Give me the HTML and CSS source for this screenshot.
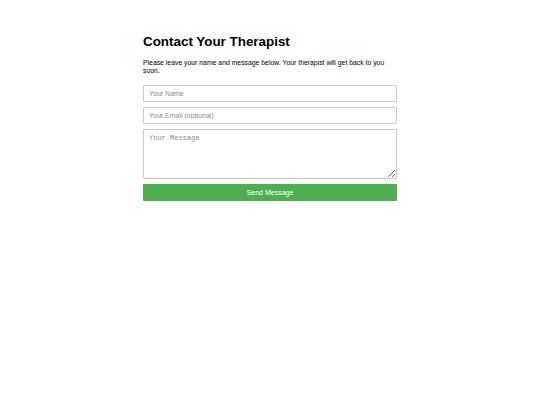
FILE: index.html
```html
<!DOCTYPE html>
<html>
<head>
<meta charset="utf-8">
<link rel="stylesheet" href="styles.css">
</head>
<body>
<div class="container">
  <h1 class="title">Contact Your Therapist</h1>
  <p class="intro">Please leave your name and message below. Your therapist will get back to you soon.</p>
  <form class="form">
    <input class="field" type="text" placeholder="Your Name">
    <input class="field" type="email" placeholder="Your Email (optional)">
    <textarea class="field message" placeholder="Your Message"></textarea>
    <button class="send" type="button">Send Message</button>
  </form>
</div>
</body>
</html>
```
FILE: styles.css
```css
html, body {
  margin: 0;
  padding: 0;
  background: #ffffff;
}
body {
  font-family: "Liberation Sans", Arial, sans-serif;
  font-size: 7px;
  color: #000;
}
.container {
  width: 254px;
  margin: 0 auto;
  padding-top: 34px;
}
.title {
  font-size: 13.4px;
  font-weight: bold;
  margin: 0 0 9px 0;
  line-height: 15.5px;
}
.intro {
  margin: 0 0 10.5px 0;
  line-height: 8px;
  font-size: 6.85px;
}
.form {
  display: flex;
  flex-direction: column;
  gap: 5px;
}
.field {
  box-sizing: border-box;
  width: 100%;
  height: 17px;
  margin: 0;
  padding: 0 5px;
  border: 1px solid #c8c8c8;
  border-radius: 1px;
  font-family: "Liberation Sans", Arial, sans-serif;
  font-size: 7px;
  color: #000;
  background: #fff;
  outline: none;
}
.field::placeholder {
  color: #8a8a8a;
}
.message {
  height: 50px;
  padding: 4px 5px;
  font-family: "Liberation Mono", "DejaVu Sans Mono", monospace;
  resize: vertical;
}
.send {
  box-sizing: border-box;
  width: 100%;
  height: 16.5px;
  margin: 0;
  padding: 0;
  border: none;
  border-radius: 1px;
  background: #4caf50;
  color: #fff;
  font-family: "Liberation Sans", Arial, sans-serif;
  font-size: 7px;
}
```
